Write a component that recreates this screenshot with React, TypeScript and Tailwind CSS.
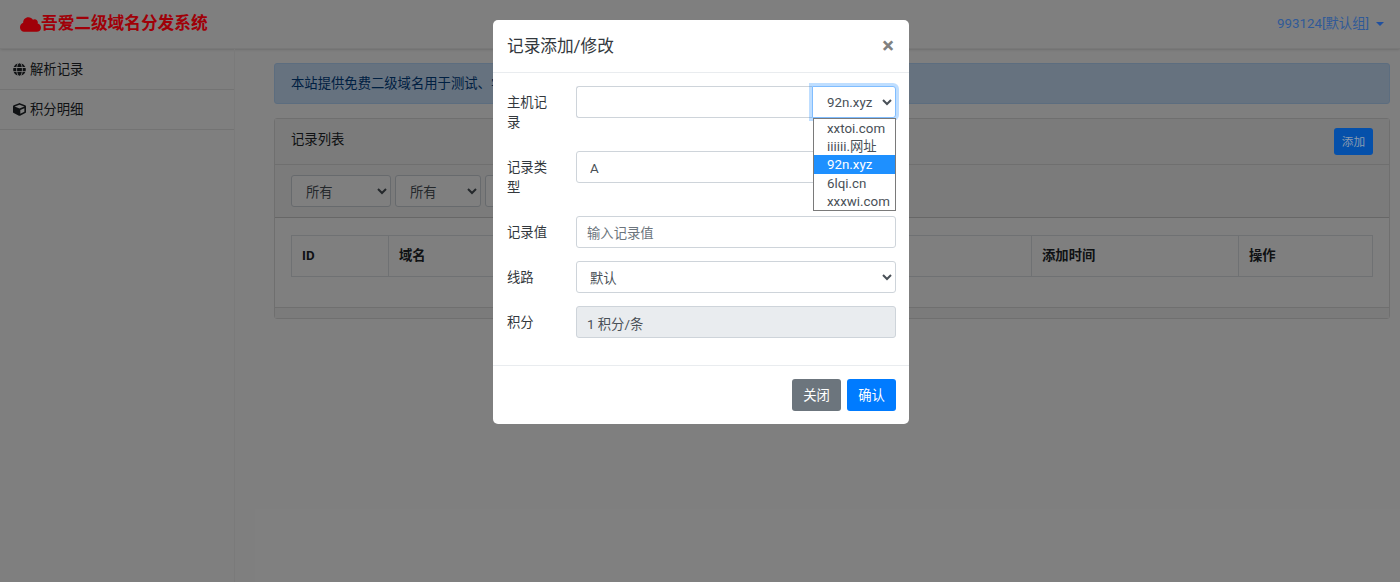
import { FaCloud, FaCube, FaGlobe } from 'react-icons/fa';

const fontStack = "font-['Roboto','Noto_Sans_CJK_SC',sans-serif]";
const filterWidths = ['w-[100px]', 'w-[86px]', 'w-[86px]'];

function FormRow({ label, children }: { label: string; children: React.ReactNode }) {
  return (
    <div className="mb-[13px] flex">
      <label className="w-[69px] shrink-0 pt-[7px] pr-[16px] pb-[5px] leading-[20px] text-[#33383d]">{label}</label>
      <div className="min-w-0 flex-1">{children}</div>
    </div>
  );
}

const inputBase =
  'block h-[32px] w-full rounded-[3px] border border-[#ced4da] pt-[2px] text-[13.33px] text-[#495057]';

export default function App() {
  return (
    <div className={`relative h-[582px] w-[1400px] overflow-hidden bg-white text-[13.33px] leading-[20px] text-[#212529] ${fontStack}`}>
      {/* Page */}
      <header className="flex h-[49px] items-center justify-between border-b border-[#f0f0f0] pr-[16px] pl-[20px] shadow-sm">
        <div className="relative z-10 flex items-center text-[16.67px] font-bold text-[#a00008]">
          <FaCloud className="h-[17px] w-[21px]" />
          <span>吾爱二级域名分发系统</span>
        </div>
        <div className="relative z-10 flex items-center gap-[7px] text-[#305a98]">
          <span>993124[默认组]</span>
          <span className="h-0 w-0 border-x-[4px] border-t-[4px] border-x-transparent border-t-[#1f50a0]" />
        </div>
      </header>

      <div className="flex h-[533px]">
        <aside className="w-[235px] shrink-0 border-r border-[#f4f4f4]">
          <div className="flex h-[41px] items-center gap-[4px] border-b border-[#e6e6e6] pl-[13px]">
            <FaGlobe className="h-[13px] w-[13px]" />
            <span className="pt-[1px]">解析记录</span>
          </div>
          <div className="flex h-[40px] items-center gap-[4px] border-b border-[#e6e6e6] pl-[13px]">
            <FaCube className="h-[13px] w-[13px]" />
            <span className="pt-[1px]">积分明细</span>
          </div>
        </aside>

        <main className="min-w-0 flex-1 pt-[14px] pr-[10px] pl-[39px]">
          <div className="mb-[14px] flex h-[41px] items-center rounded-[3px] border border-[#b8daff] bg-[#cce5ff] px-[16px] text-[#004085]">
            本站提供免费二级域名用于测试、学习，禁止用于违法用途
          </div>

          <section className="rounded-[3px] border border-[#dfdfdf]">
            <div className="flex h-[46px] items-start justify-between border-b border-[#dfdfdf] bg-[#f7f7f7] px-[16px]">
              <span className="pt-[11px]">记录列表</span>
              <button className="relative z-10 mt-[9px] h-[27px] w-[39px] rounded-[3px] bg-[#0550aa] text-[11.67px] text-[#8a9bb0]">添加</button>
            </div>

            <div className="flex h-[53px] items-center gap-[4px] border-b border-[#cfcfcf] bg-[#f7f7f7] px-[16px]">
              {filterWidths.map((w, i) => (
                <select key={i} className={`h-[32px] ${w} rounded-[3px] border border-[#ced4da] bg-white pt-[2px] pl-[10px] text-[13.33px] text-[#495057]`}>
                  <option>所有</option>
                </select>
              ))}
            </div>

            <div className="h-[89px] px-[16px] pt-[17px]">
              <table className="w-full table-fixed border-collapse font-bold">
                <thead>
                  <tr className="h-[41px]">
                    <th className="w-[97px] border border-[#dee2e6] px-[10px] text-left">ID</th>
                    <th className="border border-[#dee2e6] px-[10px] text-left">域名</th>
                    <th className="w-[173px] border border-[#dee2e6] px-[10px] text-left">记录值</th>
                    <th className="w-[207px] border border-[#dee2e6] px-[10px] text-left">添加时间</th>
                    <th className="w-[134px] border border-[#dee2e6] px-[10px] text-left">操作</th>
                  </tr>
                </thead>
              </table>
            </div>

            <div className="h-[11px] border-t border-[#dfdfdf] bg-[#f7f7f7]" />
          </section>
        </main>
      </div>

      {/* Backdrop */}
      <div className="absolute inset-0 bg-black/50" />

      {/* Modal */}
      <div className="absolute top-[20px] left-[493px] z-20 w-[416px] rounded-[5px] bg-white">
        <div className="flex h-[53px] items-center justify-between border-b border-[#e9ecef] pr-[15px] pl-[14px]">
          <h5 className="text-[16.67px] leading-[25px] text-[#33383d]">记录添加/修改</h5>
          <span className="text-[22px] leading-none font-bold text-[#808080]">×</span>
        </div>

        <div className="h-[292px] pt-[13px] pr-[13px] pl-[14px]">
          <FormRow label="主机记录">
            <div className="relative flex">
              <input className="h-[32px] min-w-0 flex-1 rounded-l-[3px] border border-r-0 border-[#ced4da] bg-white px-[10px]" />
              <select
                defaultValue="92n.xyz"
                className="h-[32px] w-[84px] rounded-r-[3px] border border-[#80bdff] bg-white pl-[10px] text-[13.33px] text-[#495057] shadow-[0_0_0_3px_rgba(0,123,255,0.25)]"
              >
                <option>xxtoi.com</option>
                <option>iiiiii.网址</option>
                <option>92n.xyz</option>
                <option>6lqi.cn</option>
                <option>xxxwi.com</option>
              </select>

              {/* Open select list */}
              <ul className="absolute top-[32px] right-0 z-10 w-[83px] border border-[#7a7a7a] bg-white text-[#495057]">
                <li className="h-[18.2px] pl-[13px] leading-[20px]">xxtoi.com</li>
                <li className="h-[18.2px] pl-[13px] leading-[20px]">iiiiii.网址</li>
                <li className="h-[18.2px] bg-[#1e90ff] pl-[13px] leading-[20px] text-white">92n.xyz</li>
                <li className="h-[18.2px] pl-[13px] leading-[20px]">6lqi.cn</li>
                <li className="h-[18.2px] pl-[13px] leading-[20px]">xxxwi.com</li>
              </ul>
            </div>
          </FormRow>

          <FormRow label="记录类型">
            <select className={`${inputBase} bg-white pl-[9px]`}>
              <option>A</option>
            </select>
          </FormRow>

          <FormRow label="记录值">
            <input className={`${inputBase} bg-white px-[10px] placeholder:text-[#6c757d]`} placeholder="输入记录值" />
          </FormRow>

          <FormRow label="线路">
            <select className={`${inputBase} bg-white pl-[9px]`}>
              <option>默认</option>
            </select>
          </FormRow>

          <FormRow label="积分">
            <input className={`${inputBase} bg-[#e9ecef] px-[10px]`} value="1 积分/条" disabled readOnly />
          </FormRow>
        </div>

        <div className="flex h-[59px] items-center justify-end gap-[6px] border-t border-[#e9ecef] px-[13px]">
          <button className="h-[32px] w-[49px] rounded-[3px] bg-[#6c757d] pt-[1px] text-white">关闭</button>
          <button className="h-[32px] w-[49px] rounded-[3px] bg-[#007bff] pt-[1px] text-white">确认</button>
        </div>
      </div>
    </div>
  );
}
